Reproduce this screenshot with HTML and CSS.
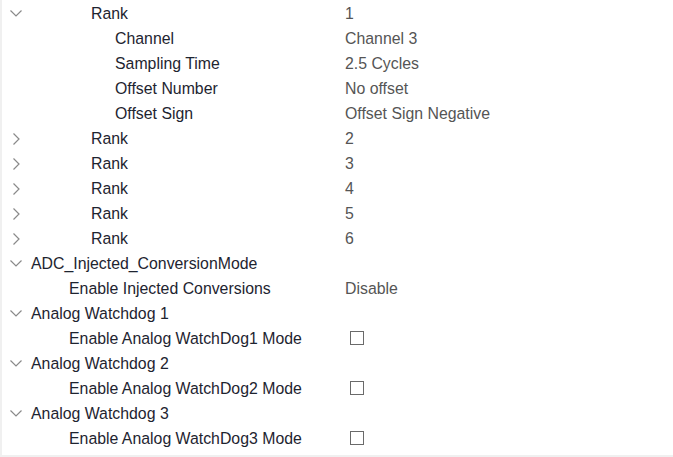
FILE: index.html
```html
<!DOCTYPE html>
<html>
<head>
<meta charset="utf-8">
<link rel="stylesheet" href="styles.css">
</head>
<body>
<div class="tree">
  <div class="row"><div class="key"><span class="tw"><svg class="chev" viewBox="0 0 12 7" width="12" height="7"><path d="M0.5 0.5 L6 6 L11.5 0.5" /></svg></span><span class="lbl l2">Rank</span></div><div class="val">1</div></div>
  <div class="row"><div class="key"><span class="tw"></span><span class="lbl l3">Channel</span></div><div class="val">Channel 3</div></div>
  <div class="row"><div class="key"><span class="tw"></span><span class="lbl l3">Sampling Time</span></div><div class="val">2.5 Cycles</div></div>
  <div class="row"><div class="key"><span class="tw"></span><span class="lbl l3">Offset Number</span></div><div class="val">No offset</div></div>
  <div class="row"><div class="key"><span class="tw"></span><span class="lbl l3">Offset Sign</span></div><div class="val">Offset Sign Negative</div></div>
  <div class="row"><div class="key"><span class="tw"><svg class="chevr" viewBox="0 0 7 12" width="7" height="12"><path d="M0.5 0.5 L6 6 L0.5 11.5" /></svg></span><span class="lbl l2">Rank</span></div><div class="val">2</div></div>
  <div class="row"><div class="key"><span class="tw"><svg class="chevr" viewBox="0 0 7 12" width="7" height="12"><path d="M0.5 0.5 L6 6 L0.5 11.5" /></svg></span><span class="lbl l2">Rank</span></div><div class="val">3</div></div>
  <div class="row"><div class="key"><span class="tw"><svg class="chevr" viewBox="0 0 7 12" width="7" height="12"><path d="M0.5 0.5 L6 6 L0.5 11.5" /></svg></span><span class="lbl l2">Rank</span></div><div class="val">4</div></div>
  <div class="row"><div class="key"><span class="tw"><svg class="chevr" viewBox="0 0 7 12" width="7" height="12"><path d="M0.5 0.5 L6 6 L0.5 11.5" /></svg></span><span class="lbl l2">Rank</span></div><div class="val">5</div></div>
  <div class="row"><div class="key"><span class="tw"><svg class="chevr" viewBox="0 0 7 12" width="7" height="12"><path d="M0.5 0.5 L6 6 L0.5 11.5" /></svg></span><span class="lbl l2">Rank</span></div><div class="val">6</div></div>
  <div class="row"><div class="key"><span class="tw"><svg class="chev" viewBox="0 0 12 7" width="12" height="7"><path d="M0.5 0.5 L6 6 L11.5 0.5" /></svg></span><span class="lbl l0">ADC_Injected_ConversionMode</span></div><div class="val"></div></div>
  <div class="row"><div class="key"><span class="tw"></span><span class="lbl l1">Enable Injected Conversions</span></div><div class="val">Disable</div></div>
  <div class="row"><div class="key"><span class="tw"><svg class="chev" viewBox="0 0 12 7" width="12" height="7"><path d="M0.5 0.5 L6 6 L11.5 0.5" /></svg></span><span class="lbl l0">Analog Watchdog 1</span></div><div class="val"></div></div>
  <div class="row"><div class="key"><span class="tw"></span><span class="lbl l1">Enable Analog WatchDog1 Mode</span></div><div class="val"><span class="cb"></span></div></div>
  <div class="row"><div class="key"><span class="tw"><svg class="chev" viewBox="0 0 12 7" width="12" height="7"><path d="M0.5 0.5 L6 6 L11.5 0.5" /></svg></span><span class="lbl l0">Analog Watchdog 2</span></div><div class="val"></div></div>
  <div class="row"><div class="key"><span class="tw"></span><span class="lbl l1">Enable Analog WatchDog2 Mode</span></div><div class="val"><span class="cb"></span></div></div>
  <div class="row"><div class="key"><span class="tw"><svg class="chev" viewBox="0 0 12 7" width="12" height="7"><path d="M0.5 0.5 L6 6 L11.5 0.5" /></svg></span><span class="lbl l0">Analog Watchdog 3</span></div><div class="val"></div></div>
  <div class="row"><div class="key"><span class="tw"></span><span class="lbl l1">Enable Analog WatchDog3 Mode</span></div><div class="val"><span class="cb"></span></div></div>
</div>
</body>
</html>
```
FILE: styles.css
```css
html, body {
  margin: 0;
  padding: 0;
  background: #ffffff;
}
.tree {
  box-sizing: border-box;
  height: 457px;
  width: 673px;
  border-left: 2px solid #f0f0f0;
  border-bottom: 2px solid #f0f0f0;
  font-family: "Liberation Sans", Arial, sans-serif;
  font-size: 15.85px;
}
.row {
  display: grid;
  grid-template-columns: 343px 1fr;
  height: 25px;
  line-height: 25px;
}
.key {
  display: flex;
  align-items: center;
  white-space: nowrap;
}
.tw {
  width: 29px;
  height: 25px;
  flex: none;
  position: relative;
}
.chev {
  position: absolute;
  left: 8px;
  top: 9px;
}
.chevr {
  position: absolute;
  left: 11px;
  top: 7px;
}
.chev path, .chevr path {
  fill: none;
  stroke: #8a8a8a;
  stroke-width: 1.2;
}
.lbl {
  color: #1e2430;
  padding-top: 1px;
}
.l0 { padding-left: 0; }
.l1 { padding-left: 38px; }
.l2 { padding-left: 60px; }
.l3 { padding-left: 84px; }
.val {
  color: #555555;
  padding-top: 1px;
  display: flex;
  align-items: center;
  height: 24px;
}
.cb {
  display: block;
  width: 12px;
  height: 12px;
  margin-left: 5px;
  margin-top: -1px;
  border: 1.5px solid #6a6a6a;
  background: #fff;
}
```
